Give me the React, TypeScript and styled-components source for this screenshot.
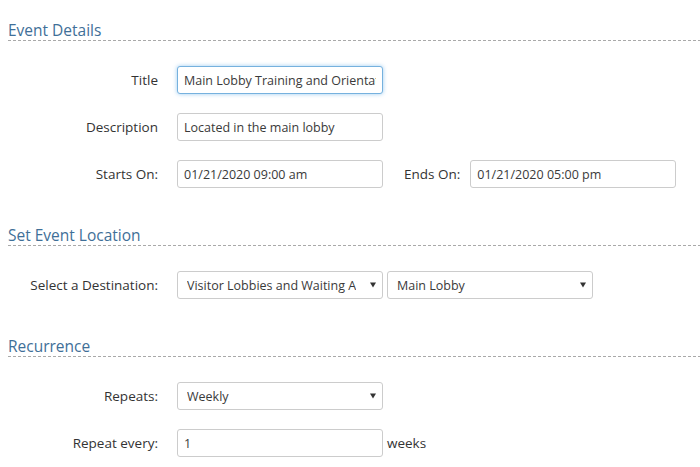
import React, { FC } from "react";
import styled, { createGlobalStyle, css } from "styled-components";

const textColor = "#333333";
const headingColor = "#3f6f98";

const GlobalStyle = createGlobalStyle`
  html, body {
    margin: 0;
    padding: 0;
    background: #ffffff;
  }
  body {
    font-family: "Open Sans", "Liberation Sans", Arial, sans-serif;
    color: ${textColor};
  }
`;

const Page = styled.div`
  width: 700px;
  padding-left: 8px;
  box-sizing: border-box;
`;

const Section = styled.section`
  display: flex;
  flex-direction: column;
  gap: 19px;
  padding-bottom: 17px;
`;

const Heading = styled.h2`
  margin: 20px 0 25px 0;
  padding-bottom: 1px;
  font-size: 15.5px;
  line-height: 20px;
  font-weight: 400;
  color: ${headingColor};
  background-image: repeating-linear-gradient(
    to right,
    #a9a9a9 0,
    #a9a9a9 3px,
    transparent 3px,
    transparent 5px
  );
  background-size: 100% 1px;
  background-repeat: no-repeat;
  background-position: left bottom;
`;

const Row = styled.div`
  display: flex;
  align-items: center;
  height: 28px;
`;

const Label = styled.label`
  width: 150px;
  margin-right: 19px;
  text-align: right;
  font-size: 13.5px;
  color: ${textColor};
  flex-shrink: 0;
`;

const SideLabel = styled.label`
  margin-left: 21px;
  margin-right: 10px;
  font-size: 13.5px;
  color: ${textColor};
`;

const fieldBase = css`
  box-sizing: border-box;
  width: 206px;
  height: 28px;
  border: 1px solid #cccccc;
  border-radius: 3px;
  background: #ffffff;
  font-family: "Open Sans", "Liberation Sans", Arial, sans-serif;
  font-size: 12.5px;
  color: #3a3a3a;
  outline: none;
`;

const Input = styled.input<{ $focused?: boolean }>`
  ${fieldBase};
  padding: 0 6px;
  ${(p) =>
    p.$focused &&
    css`
      border-color: #76b1de;
      box-shadow: 0 0 4px rgba(102, 175, 233, 0.65);
    `}
`;

const SelectWrap = styled.span`
  position: relative;
  display: inline-flex;
  & + & {
    margin-left: 4px;
  }
`;

const Select = styled.select`
  ${fieldBase};
  appearance: none;
  -webkit-appearance: none;
  padding: 0 26px 0 9px;
`;

const Arrow = styled.svg`
  position: absolute;
  right: 7px;
  top: 11px;
  pointer-events: none;
`;

const Suffix = styled.span`
  margin-left: 4px;
  font-size: 13.5px;
  color: ${textColor};
`;

type DropdownProps = { value: string; options?: string[] };

const Dropdown: FC<DropdownProps> = ({ value, options }) => (
  <SelectWrap>
    <Select defaultValue={value}>
      {(options ?? [value]).map((o) => (
        <option key={o}>{o}</option>
      ))}
    </Select>
    <Arrow width="6" height="6" viewBox="0 0 6 6">
      <path d="M0 0.5 H6 L3 5.5 Z" fill="#333" />
    </Arrow>
  </SelectWrap>
);

const App: FC = () => (
  <Page>
    <GlobalStyle />
    <Heading>Event Details</Heading>
    <Section>
      <Row>
        <Label>Title</Label>
        <Input $focused defaultValue="Main Lobby Training and Orientation" />
      </Row>
      <Row>
        <Label>Description</Label>
        <Input defaultValue="Located in the main lobby" />
      </Row>
      <Row>
        <Label>Starts On:</Label>
        <Input defaultValue="01/21/2020 09:00 am" />
        <SideLabel>Ends On:</SideLabel>
        <Input defaultValue="01/21/2020 05:00 pm" />
      </Row>
    </Section>

    <Heading>Set Event Location</Heading>
    <Section>
      <Row>
        <Label>Select a Destination:</Label>
        <Dropdown value="Visitor Lobbies and Waiting Areas" />
        <Dropdown value="Main Lobby" />
      </Row>
    </Section>

    <Heading>Recurrence</Heading>
    <Section>
      <Row>
        <Label>Repeats:</Label>
        <Dropdown value="Weekly" options={["Daily", "Weekly", "Monthly"]} />
      </Row>
      <Row>
        <Label>Repeat every:</Label>
        <Input defaultValue="1" />
        <Suffix>weeks</Suffix>
      </Row>
    </Section>
  </Page>
);

export default App;
